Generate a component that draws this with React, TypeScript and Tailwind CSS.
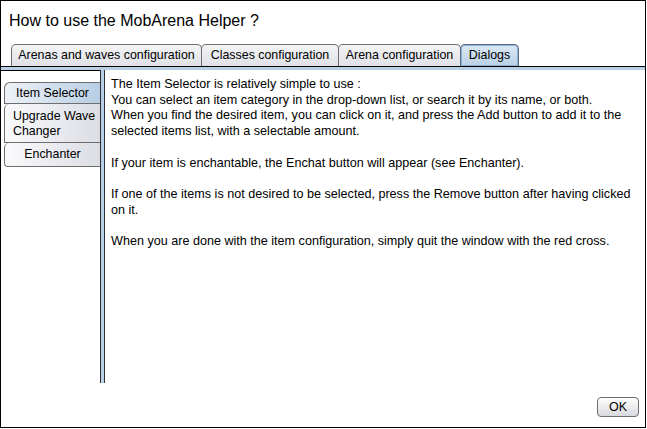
import React from "react";

const font = { fontFamily: '"Liberation Sans", Arial, sans-serif' };

function TopTab({ label, w, selected }: { label: string; w: number; selected?: boolean }) {
  return (
    <div
      style={{ width: w }}
      className={
        "h-[22px] -mr-px flex items-center justify-center rounded-t-[5px] border border-b-0 text-[12.4px] text-black " +
        (selected
          ? "border-[#5a6a80] bg-gradient-to-b from-[#dce8f4] to-[#b9d0e6] shadow-[inset_0_0_0_1px_#8fb2d6]"
          : "border-[#6e6e6e] bg-gradient-to-b from-[#f4f4f6] to-[#dfe1e6]")
      }
    >
      {label}
    </div>
  );
}

export default function App() {
  return (
    <div style={font} className="w-[646px] h-[428px] border border-black bg-white flex flex-col text-black">
      <div className="h-[44px] pl-[8px] pt-[10px] text-[16px] leading-[20px]">How to use the MobArena Helper ?</div>
      <div className="flex items-end pl-[10px] h-[21px]">
        <TopTab label="Arenas and waves configuration" w={191} />
        <TopTab label="Classes configuration" w={138} />
        <TopTab label="Arena configuration" w={123} />
        <TopTab label="Dialogs" w={59} selected />
      </div>
      <div className="border-t border-black h-[4px] bg-[#b8cfe5]" />
      <div className="flex h-[313px]">
        <div className="w-[99px] flex flex-col">
          <div className="h-[12px] border-t border-black" />
          <div className="ml-[3px] h-[22px] flex items-center justify-center rounded-tl-[6px] border border-r-0 border-[#6e6e6e] bg-gradient-to-r from-[#eef2f7] to-[#b8cee4] text-[12.4px]">
            Item Selector
          </div>
          <div className="ml-[3px] h-[39px] flex flex-col justify-center pl-[8px] pt-[2px] rounded-tl-[5px] border border-t-0 border-r-0 border-[#6e6e6e] bg-gradient-to-r from-[#fafafc] to-[#dcdee5] text-[12.4px] leading-[15px]">
            <span>Upgrade Wave</span>
            <span>Changer</span>
          </div>
          <div className="ml-[3px] h-[24px] flex items-center justify-center rounded-tl-[5px] rounded-bl-[4px] border border-t-0 border-r-0 border-[#6e6e6e] bg-gradient-to-r from-[#fafafc] to-[#dcdee5] text-[12.4px]">
            Enchanter
          </div>
        </div>
        <div className="w-[5px] border-x border-[#2a2f38] bg-[#b8cfe5]" />
        <div className="flex-1 pl-[6px] pt-[7px] text-[12.6px] leading-[15.7px]">
          <p>The Item Selector is relatively simple to use :</p>
          <p>You can select an item category in the drop-down list, or search it by its name, or both.</p>
          <p>When you find the desired item, you can click on it, and press the Add button to add it to the</p>
          <p>selected items list, with a selectable amount.</p>
          <p>&nbsp;</p>
          <p>If your item is enchantable, the Enchat button will appear (see Enchanter).</p>
          <p>&nbsp;</p>
          <p>If one of the items is not desired to be selected, press the Remove button after having clicked</p>
          <p>on it.</p>
          <p>&nbsp;</p>
          <p>When you are done with the item configuration, simply quit the window with the red cross.</p>
        </div>
      </div>
      <div className="flex-1 flex justify-end items-start pt-[14px] pr-[6px]">
        <button className="w-[42px] h-[20px] rounded-[4px] border border-[#6e6e6e] bg-gradient-to-b from-[#ffffff] to-[#d8d9de] text-[12.5px] leading-none">
          OK
        </button>
      </div>
    </div>
  );
}
